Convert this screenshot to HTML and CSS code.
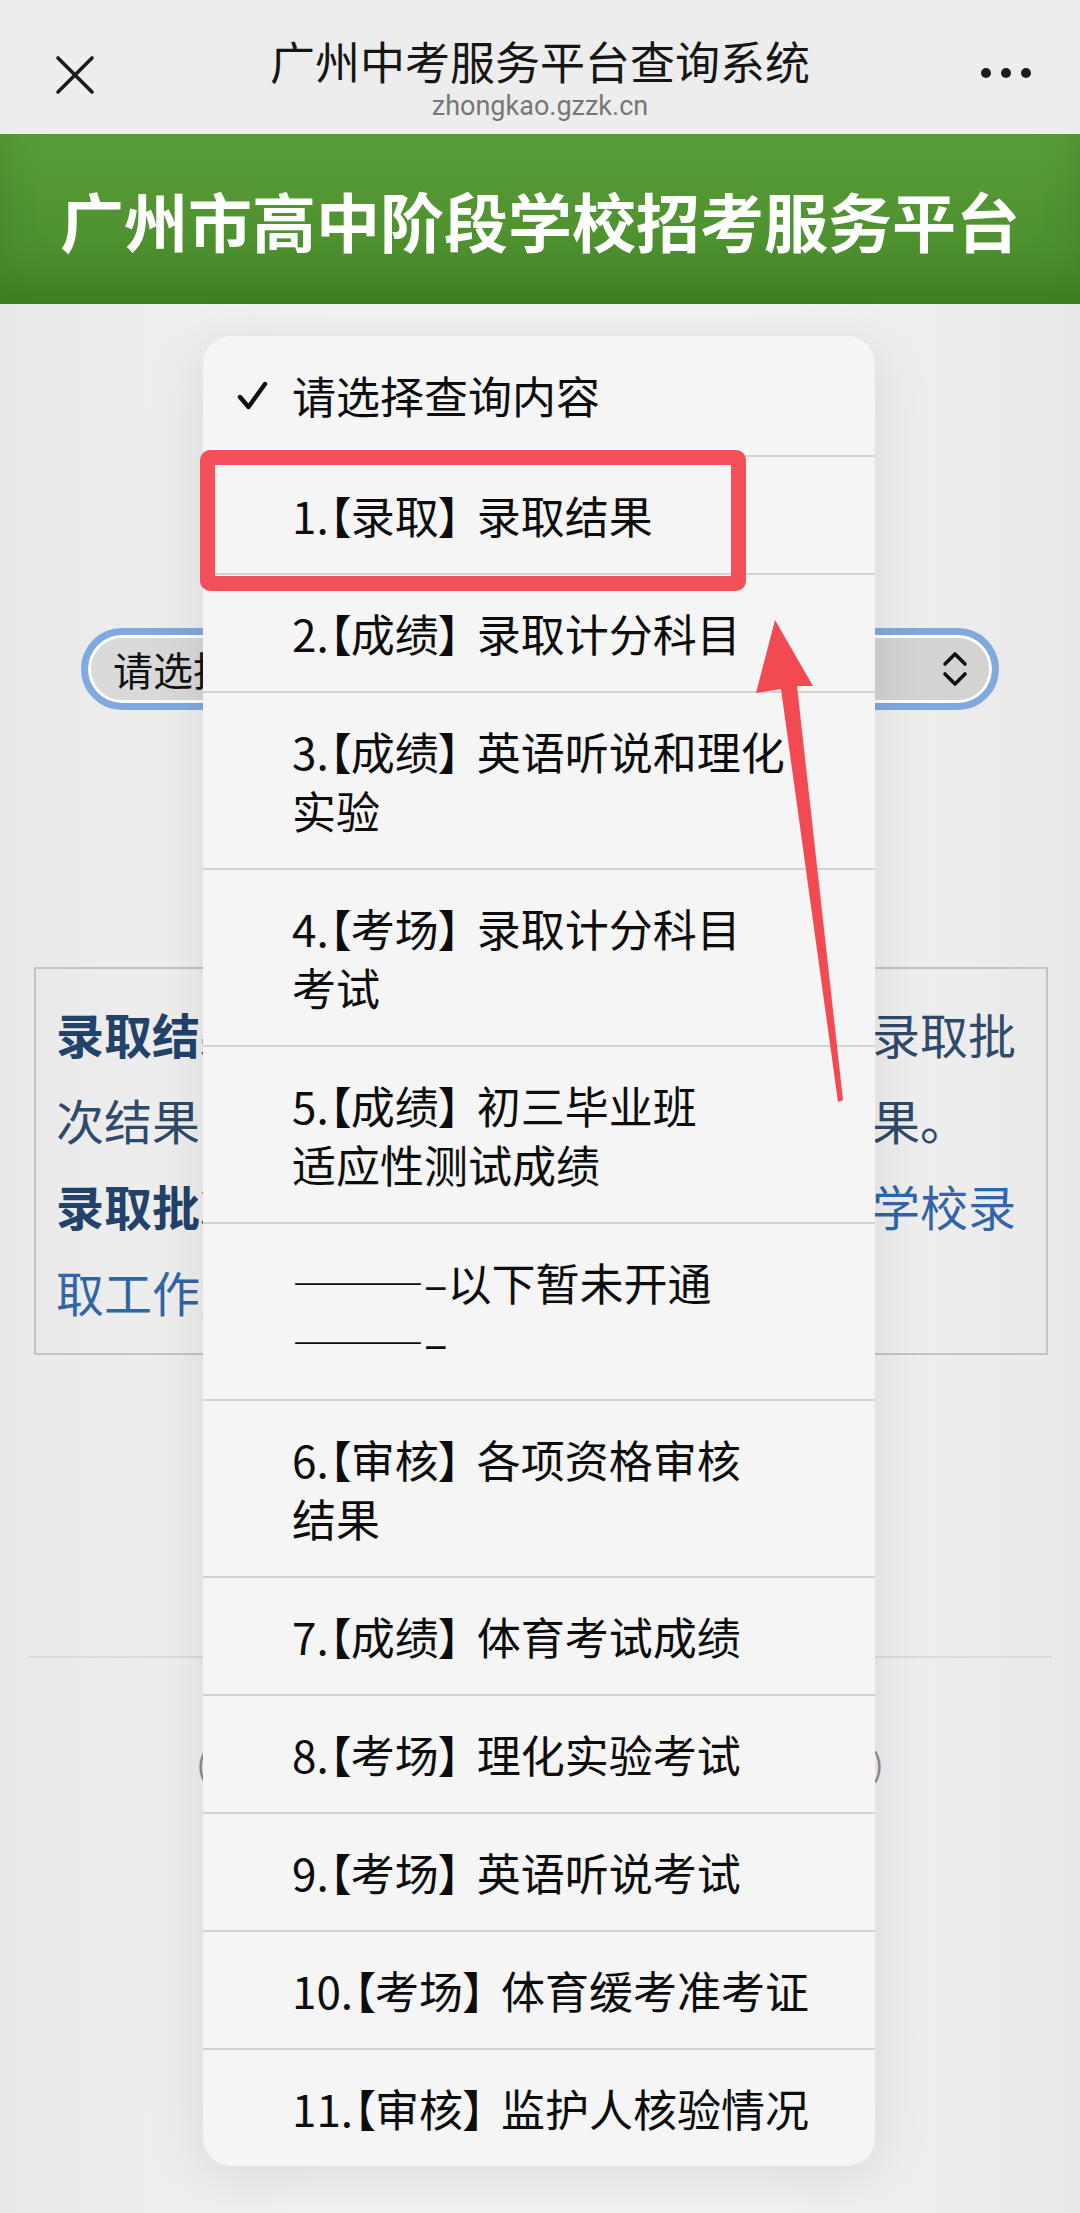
FILE: index.html
```html
<!DOCTYPE html>
<html lang="zh-CN">
<head>
    <meta charset="UTF-8">
    <meta name="viewport" content="width=1080">
    <title>广州中考服务平台查询系统</title>
    <link rel="stylesheet" href="styles.css">
</head>
<body>
    <div class="topbar">
        <svg class="close" width="42" height="42" viewBox="0 0 42 42">
            <path d="M4 4 L38 38 M38 4 L4 38" stroke="#1c1c1c" stroke-width="3.6" stroke-linecap="round"/>
        </svg>
        <div class="titles">
            <div class="title">广州中考服务平台查询系统</div>
            <div class="url">zhongkao.gzzk.cn</div>
        </div>
        <svg class="more" width="50" height="14" viewBox="0 0 50 14">
            <circle cx="5" cy="7" r="5" fill="#1c1c1c"/>
            <circle cx="25" cy="7" r="5" fill="#1c1c1c"/>
            <circle cx="45" cy="7" r="5" fill="#1c1c1c"/>
        </svg>
    </div>

    <header class="banner">广州市高中阶段学校招考服务平台</header>

    <div class="content">
        <div class="picker">
            <span>请选择查询内容</span>
            <svg width="26" height="40" viewBox="0 0 26 40">
                <path d="M3 15 L13 5 L23 15 M3 25 L13 35 L23 25" fill="none" stroke="#111" stroke-width="3.6" stroke-linecap="round" stroke-linejoin="round"/>
            </svg>
        </div>

        <div class="notice">
            <p><b>录取结果：</b>考生可登录查询本人在各个录取批次结果，包括录取学校和录取状态等结果。</p>
            <p class="blue"><b>录取批次：</b>具体请参见广州市高中阶段学校录取工作方案。</p>
        </div>

        <div class="rule"></div>
        <div class="foot">(主办：广州市招生考试委员会办公室、信息中心)</div>
    </div>

    <div class="menu">
        <div class="menu-head">
            <svg width="31" height="31" viewBox="0 0 31 31">
                <path d="M3 17 L11.5 27 L28 4" fill="none" stroke="#111" stroke-width="4.4" stroke-linecap="round" stroke-linejoin="round"/>
            </svg>
            <span>请选择查询内容</span>
        </div>
        <div class="opt">1.<span class="tag">【录取】</span>录取结果</div>
        <div class="opt">2.<span class="tag">【成绩】</span>录取计分科目</div>
        <div class="opt">3.<span class="tag">【成绩】</span>英语听说和理化<br>实验</div>
        <div class="opt">4.<span class="tag">【考场】</span>录取计分科目<br>考试</div>
        <div class="opt">5.<span class="tag">【成绩】</span>初三毕业班<br>适应性测试成绩</div>
        <div class="opt">———–以下暂未开通<br>———–</div>
        <div class="opt">6.<span class="tag">【审核】</span>各项资格审核<br>结果</div>
        <div class="opt">7.<span class="tag">【成绩】</span>体育考试成绩</div>
        <div class="opt">8.<span class="tag">【考场】</span>理化实验考试</div>
        <div class="opt">9.<span class="tag">【考场】</span>英语听说考试</div>
        <div class="opt">10.<span class="tag">【考场】</span>体育缓考准考证</div>
        <div class="opt">11.<span class="tag">【审核】</span>监护人核验情况</div>
    </div>

    <div class="mark"></div>

    <svg class="arrow" width="1080" height="2213" viewBox="0 0 1080 2213">
        <polygon points="775,620 813,686 797,686 843,1100 838,1102 781,689 756,693" fill="#f34a52"/>
    </svg>
</body>
</html>
```

FILE: styles.css
```css
* {
    margin: 0;
    padding: 0;
    box-sizing: border-box;
}
body {
    position: relative;
    width: 1080px;
    min-height: 2213px;
    font-family: "Noto Sans CJK SC", "Noto Sans", sans-serif;
    background: linear-gradient(to right, #e9e9e9, #f3f3f3 30%, #f3f3f3 70%, #e9e9e9);
    color: #111;
    overflow: hidden;
}
.topbar {
    display: grid;
    grid-template-columns: 1fr auto 1fr;
    height: 134px;
    background-color: #ededed;
}
.close {
    margin: 54px 0 0 54px;
}
.titles {
    padding-top: 33px;
    text-align: center;
}
.title {
    font-size: 45px;
    line-height: 56px;
    color: #161616;
}
.url {
    font-family: Roboto, "Noto Sans", sans-serif;
    font-size: 27px;
    line-height: 34px;
    color: #777;
}
.more {
    justify-self: end;
    margin: 66px 49px 0 0;
}
.banner {
    height: 170px;
    display: flex;
    align-items: center;
    justify-content: center;
    font-size: 64px;
    font-weight: bold;
    color: #fff;
    background: linear-gradient(to bottom, #599d38, #488a2a);
    box-shadow: inset 0 -24px 40px rgba(30, 70, 10, 0.2);
}
.content {
    padding-top: 324px;
}
.picker {
    margin: 0 81px;
    height: 82px;
    display: flex;
    align-items: center;
    justify-content: space-between;
    padding: 0 24px 0 25px;
    border: 7px solid #7fa9df;
    border-radius: 41px;
    background: linear-gradient(to right, #dadada, #d3d3d3);
    box-shadow: inset 0 0 0 3px #fff;
    font-size: 40px;
    color: #111;
}
.notice {
    margin: 257px 32px 0 34px;
    padding: 21px 28px 19px 20px;
    border: 2px solid #c3c3c3;
    font-size: 48px;
    line-height: 86px;
    color: #2e4a6c;
}
.notice b {
    color: #22426a;
}
.notice .blue {
    color: #3264a8;
}
.rule {
    margin: 301px 28px 0;
    border-top: 2px solid #dcdcdc;
}
.foot {
    margin-top: 82px;
    text-align: center;
    font-size: 31.7px;
    color: #8a8a8a;
}
.menu {
    position: absolute;
    left: 203px;
    top: 336px;
    width: 672px;
    background-color: #f5f5f5;
    border-radius: 28px;
    box-shadow: 0 10px 60px rgba(0, 0, 0, 0.10);
    overflow: hidden;
    font-size: 44px;
    line-height: 59px;
    color: #0d0d0d;
    font-feature-settings: "palt";
}
.menu-head {
    display: flex;
    align-items: center;
    gap: 24px;
    padding: 30px 0 30px 34px;
}
.opt {
    padding: 29px 40px 28px 89px;
    border-top: 2px solid #d3d3d3;
}
.tag {
    margin-right: 16px;
}
.mark {
    position: absolute;
    left: 200px;
    top: 450px;
    width: 546px;
    height: 141px;
    border: 15px solid #f4505a;
    border-radius: 10px;
}
.arrow {
    position: absolute;
    left: 0;
    top: 0;
    pointer-events: none;
}
```
